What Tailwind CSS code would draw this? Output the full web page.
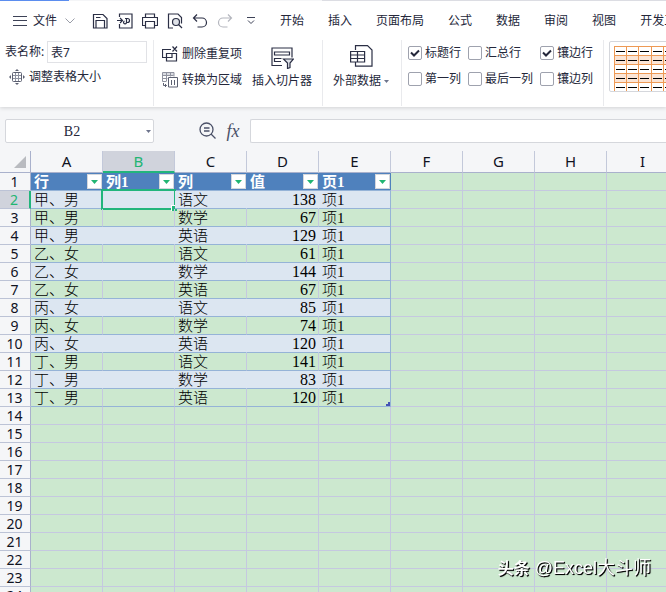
<!DOCTYPE html>
<html lang="zh-CN">
<head>
    <meta charset="UTF-8">
    <meta name="viewport" content="width=device-width, initial-scale=1.0">
    <title>表格工具</title>
    <script src="https://cdn.jsdelivr.net/npm/@tailwindcss/browser@4"></script>
</head>
<body class="h-screen overflow-hidden flex flex-col bg-[#f5f6f8] text-xs leading-4 text-[#24273a] font-['Noto_Sans','Noto_Sans_CJK_SC',sans-serif]">
    <header class="shrink-0 bg-white shadow-[0_1px_4px_rgba(0,0,0,0.15)] overflow-hidden">
        <!-- Window tab edge -->
        <div class="flex h-px">
            <div class="w-[69px] bg-[#5b8def]"></div>
            <div class="w-[253px] bg-[#f4f5f7]"></div>
            <div class="flex-1 bg-[#dcdde3]"></div>
        </div>

        <!-- Menu bar -->
        <nav class="flex items-center h-[39px] pt-px pl-[13px] whitespace-nowrap">
            <button class="flex items-center">
                <svg class="w-[14px] h-[10px] mr-[6px]" viewBox="0 0 14 10" stroke="#3d4257" fill="none"><path d="M0 .5h14M0 4.500h14M0 9.500h14"/></svg>
                文件
                <svg class="w-[10px] h-[6px] ml-2" viewBox="0 0 10 6" stroke="#9a9da8" fill="none"><path d="M.5.5 5 5 9.500.5"/></svg>
            </button>
            <div class="w-px h-6 ml-2 mr-[9px] bg-[#dfe0e4]"></div>
            <div class="flex items-center gap-[9px] text-[#2b2f45]">
                <button aria-label="保存"><svg class="w-4 h-4" viewBox="0 0 16 16" fill="none" stroke="currentColor" stroke-width="1.200"><path d="M1.500 1.500h9.500l4 4v9.500h-13.500zM4 14.500v-7h8.500v7M4 4.500h4.500"/></svg></button>
                <button aria-label="输出为PDF"><svg class="w-4 h-4" viewBox="0 0 16 16" fill="none" stroke="currentColor" stroke-width="1.200"><path d="M2.500 4V1h12.500v14h-12.500v-4M0 7.500h5.500M3 5l2.500 2.500L3 10M8 5.500h2.500a2 2 0 1 1 0 4h-1.500M9.500 5.500v4a1.500 1.500 0 1 1-2-1.500"/></svg></button>
                <button aria-label="打印"><svg class="w-4 h-4" viewBox="0 0 16 16" fill="none" stroke="currentColor" stroke-width="1.200"><path d="M3.500 4.500v-3.500h9v3.500M3.500 12.500h-3v-8h15v8h-3M3.500 8.500h9v6.500h-9z"/></svg></button>
                <button aria-label="打印预览"><svg class="w-4 h-4" viewBox="0 0 16 16" fill="none" stroke="currentColor" stroke-width="1.200"><path d="M6 15h-4.500v-14h9.500l3.500 3.500v6"/><circle cx="9" cy="9" r="3.500" fill="#dfe2e8"/><path d="m11.500 11.500 3.500 3.500"/></svg></button>
                <button aria-label="撤销"><svg class="w-4 h-4" viewBox="0 0 16 16" fill="none" stroke="currentColor" stroke-width="1.200"><path d="M5 1.500 1.500 5 5 8.500M1.500 5h8.500a4.500 4.500 0 0 1 0 9h-4.500"/></svg></button>
                <button aria-label="恢复"><svg class="w-4 h-4 text-[#b4b6be]" viewBox="0 0 16 16" fill="none" stroke="currentColor" stroke-width="1.200"><path d="m11 1.500 3.500 3.500L11 8.500M14.500 5h-8.500a4.500 4.500 0 0 0 0 9h4.500"/></svg></button>
            </div>
            <button class="ml-[14px]" aria-label="自定义快速访问工具栏"><svg class="w-2 h-2" viewBox="0 0 8 8" fill="none" stroke="#3d4257"><path d="M0 .5h8M1 3.500l3 3 3-3"/></svg></button>
            <div class="w-px h-6 ml-[9px] mr-4 bg-[#dfe0e4]"></div>
            <div class="flex gap-6">
                <a href="#">开始</a>
                <a href="#">插入</a>
                <a href="#">页面布局</a>
                <a href="#">公式</a>
                <a href="#">数据</a>
                <a href="#">审阅</a>
                <a href="#">视图</a>
                <a href="#">开发工具</a>
            </div>
        </nav>

        <!-- Ribbon -->
        <div class="flex h-[67px] pb-px whitespace-nowrap">
            <section class="w-[153px] shrink-0 pt-px pl-[5px]">
                <div class="flex items-center justify-between pr-[6px]">
                    <label for="tableName">表名称:</label>
                    <input id="tableName" type="text" value="表7" class="w-[100px] h-[22px] px-[3px] border border-[#e1e2e6]">
                </div>
                <button class="flex items-center gap-1 mt-[6px] ml-1">
                    <svg class="w-4 h-4" viewBox="0 0 16 16" fill="none" stroke="#5d6172"><rect x="3.500" y="3.500" width="9" height="9" rx="1"/><path stroke="#8f93a1" d="M6.500 4v8M9.500 4v8M4 6.500h8M4 9.500h8"/><path fill="#5d6172" stroke="none" d="m8 0 2 2H6zM8 16l2-2H6zM0 8l2-2v4zM16 8l-2-2v4z"/></svg>
                    调整表格大小
                </button>
            </section>
            <section class="flex w-[169px] shrink-0 pl-2 border-l border-[#e9eaed]">
                <div class="flex flex-col gap-[10px] pt-[6px]">
                    <button class="flex items-center gap-1">
                        <svg class="w-4 h-4" viewBox="0 0 16 16" fill="none" stroke="#2b2f45" stroke-width="1.200"><path d="M9 3.500H.5v8h9.500v-4M4.500 7.500h10v7.500h-10zM10.500.5l4.500 5M15 .5l-4.500 5"/></svg>
                        删除重复项
                    </button>
                    <button class="flex items-center gap-1">
                        <svg class="w-4 h-4" viewBox="0 0 16 16" fill="none" stroke="#9093a0"><path fill="#d9dbe1" stroke="none" d="M0 1h12v3H0z"/><path d="M4 9.500H.5v-9h11.500v4M.5 3.500h11M.5 6.500h5M4.500.5v9M8.500.5v4"/><path stroke="#5d6172" d="M6.500 5.500h9v9.500h-9zM9.500 8v5M12.500 8v5M1.500 11v2.500h3M3 12l1.500 1.500L3 15"/></svg>
                        转换为区域
                    </button>
                </div>
                <button class="flex flex-col items-center ml-[10px] pt-[7px]">
                    <svg class="w-[23px] h-[22px] mb-[4px]" viewBox="0 0 23 22" fill="none" stroke="#2b2f45" stroke-width="1.200"><path d="M11 18.500H1V1h20v9.500M3.500 5h15v3h-15zM10.500 11.500h-7v3h6.500"/><path fill="#dfe2e8" d="M12.500 12h10l-3.500 4v4.500l-2.500 1V16z"/></svg>
                    插入切片器
                </button>
            </section>
            <section class="w-[79px] shrink-0 pl-[10px] border-l border-[#e9eaed]">
                <button class="flex flex-col items-center pt-[5px]">
                    <svg class="w-[23px] h-[22px] mb-[6px]" viewBox="0 0 23 22" fill="none" stroke="#2b2f45" stroke-width="1.200"><path d="M5.500 5V.6h12l4.500 4.500v16H5.500V17M.6 6.500h14v10.500H.6zM.6 10h14M.6 13.500h14M7.500 6.500V17"/></svg>
                    <span class="flex items-center gap-[3px]">外部数据<svg class="w-[5px] h-[3px]" viewBox="0 0 5 3" fill="#6d748c"><path d="M0 0h5L2.500 3z"/></svg></span>
                </button>
            </section>
            <section class="w-[202px] shrink-0 grid grid-cols-[60px_72px_53px] content-start gap-y-[10px] pt-[5px] pl-[6px] border-l border-[#e9eaed]">
                <label class="flex items-center gap-[3px]"><input type="checkbox" checked class="peer appearance-none size-[14px] rounded-xs border border-[#9fa2ae] bg-white"><svg class="hidden peer-checked:block w-[10px] h-2 -ml-[15px] mr-[2px]" viewBox="0 0 10 8" fill="none" stroke="#24273a" stroke-width="2"><path d="M1 3.500 4 6.500 9 1.500"/></svg>标题行</label>
                <label class="flex items-center gap-[3px]"><input type="checkbox" class="appearance-none size-[14px] rounded-xs border border-[#9fa2ae] bg-white">汇总行</label>
                <label class="flex items-center gap-[3px]"><input type="checkbox" checked class="peer appearance-none size-[14px] rounded-xs border border-[#9fa2ae] bg-white"><svg class="hidden peer-checked:block w-[10px] h-2 -ml-[15px] mr-[2px]" viewBox="0 0 10 8" fill="none" stroke="#24273a" stroke-width="2"><path d="M1 3.500 4 6.500 9 1.500"/></svg>镶边行</label>
                <label class="flex items-center gap-[3px]"><input type="checkbox" class="appearance-none size-[14px] rounded-xs border border-[#9fa2ae] bg-white">第一列</label>
                <label class="flex items-center gap-[3px]"><input type="checkbox" class="appearance-none size-[14px] rounded-xs border border-[#9fa2ae] bg-white">最后一列</label>
                <label class="flex items-center gap-[3px]"><input type="checkbox" class="appearance-none size-[14px] rounded-xs border border-[#9fa2ae] bg-white">镶边列</label>
            </section>
            <section class="flex-1 min-w-0 pl-[5px] pt-px border-l border-[#e9eaed]">
                <button aria-label="表格样式" class="block w-[200px] h-[51px] pl-1 pt-1 border border-[#d5d7dc] rounded-xs overflow-hidden">
                    <svg class="w-[62px] h-[46px]" viewBox="0 0 62 46" shape-rendering="crispEdges">
                        <path fill="#fbe5d6" d="M0 10h62v8H0zM0 28h62v8H0z"/>
                        <path stroke="#ee9a55" fill="none" d="M0 .5h62M0 9.500h62M0 18.500h62M0 27.500h62M0 36.500h62M.5 0v46M12.500 0v46M24.500 0v46M37.500 0v46M49.500 0v46M61.500 0v46"/>
                        <path stroke="#000" fill="none" d="M2 5.500h9M14 5.500h9M26 5.500h9M39 5.500h9M51 5.500h9M2 14.500h9M14 14.500h9M26 14.500h9M39 14.500h9M51 14.500h9M2 23.500h9M14 23.500h9M26 23.500h9M39 23.500h9M51 23.500h9M2 32.500h9M14 32.500h9M26 32.500h9M39 32.500h9M51 32.500h9M2 41.500h9M14 41.500h9M26 41.500h9M39 41.500h9M51 41.500h9"/>
                    </svg>
                </button>
            </section>
        </div>
    </header>

    <!-- Formula bar -->
    <div class="flex items-center shrink-0 h-11 pt-1 pl-[5px]">
        <div class="flex items-center w-[149px] h-6 pr-[2px] bg-white border border-[#d5d7dc] rounded-xs">
            <input aria-label="名称框" type="text" value="B2" class="flex-1 min-w-0 h-5 pr-2 pt-px text-center text-sm font-['Liberation_Serif',serif]">
            <svg class="w-[5px] h-[3px]" viewBox="0 0 5 3" fill="#6d748c"><path d="M0 0h5L2.500 3z"/></svg>
        </div>
        <button class="ml-[45px]" aria-label="查找"><svg class="w-[18px] h-[18px]" viewBox="0 0 18 18" fill="none" stroke="#4b5168" stroke-width="1.300"><circle cx="7.500" cy="7.500" r="6.500"/><path d="M5 6h5.500M5 9h5.500M12 12l4.500 4.500"/></svg></button>
        <button class="w-5 ml-[6px] mr-[7px] text-[18px] leading-5 italic text-[#4b5168] font-['Liberation_Serif',serif]" aria-label="插入函数">fx</button>
        <input aria-label="编辑栏" type="text" class="flex-1 min-w-0 h-6 px-2 bg-white border border-r-0 border-[#d5d7dc] rounded-l-xs">
    </div>

    <!-- Sheet -->
    <main class="flex-1 min-h-0 overflow-hidden bg-[#cce8cf]">
        <table class="table-fixed border-separate border-spacing-0 w-[679px]">
            <colgroup>
                <col class="w-[31px]">
                <col span="9" class="w-[72px]">
            </colgroup>
            <thead id="sheetHead"></thead>
            <tbody id="sheetBody" class="text-black"></tbody>
        </table>
    </main>

    <div class="fixed right-[15px] bottom-[12px] flex items-center gap-[5px] text-white [text-shadow:1px_1px_1px_#000,1px_1px_0_#333] pointer-events-none">
        <span class="text-base leading-6 font-bold">头条</span>
        <span class="text-[18px] leading-6 font-['Liberation_Sans','Noto_Sans_CJK_SC',sans-serif]">@Excel大斗师</span>
    </div>

    <script>
        const letters = ['A', 'B', 'C', 'D', 'E', 'F', 'G', 'H', 'I'];
        const headers = ['行', '列1', '列', '值', '页1'];
        const rows = [
            ['甲、男', '', '语文', 138, '项1'],
            ['甲、男', '', '数学', 67, '项1'],
            ['甲、男', '', '英语', 129, '项1'],
            ['乙、女', '', '语文', 61, '项1'],
            ['乙、女', '', '数学', 144, '项1'],
            ['乙、女', '', '英语', 67, '项1'],
            ['丙、女', '', '语文', 85, '项1'],
            ['丙、女', '', '数学', 74, '项1'],
            ['丙、女', '', '英语', 120, '项1'],
            ['丁、男', '', '语文', 141, '项1'],
            ['丁、男', '', '数学', 83, '项1'],
            ['丁、男', '', '英语', 120, '项1']
        ];

        // Column letters
        let head = '<tr><th class="h-[22px] p-0 bg-[#f5f6f8] border-r border-b border-[#a9b1cc]"><svg class="w-3 h-3 ml-auto mr-1" viewBox="0 0 12 12" fill="#b9bbc0"><path d="M12 0v12H0z"/></svg></th>';
        letters.forEach((l) => {
            const cls = l === 'B'
                ? 'bg-[#d0d3dc] text-[#22b573] border-b-2 border-b-[#22b57c]'
                : 'bg-[#f5f6f8] text-[#10121f] border-b border-b-[#a9b1cc]';
            head += `<th scope="col" class="h-[22px] p-0 text-[15px] leading-5 align-top font-normal border-r border-r-[#c3c9da] ${cls}">${l}</th>`;
        });
        document.getElementById('sheetHead').innerHTML = head + '</tr>';

        // Sheet rows
        let body = '';
        for (let n = 1; n <= 24; n++) {
            const num = n === 2
                ? 'bg-[#d0d3dc] text-[#22b573] border-r-2 border-r-[#22b57c]'
                : 'bg-[#f5f6f8] text-[#10121f] border-r border-r-[#a9b1cc]';
            body += `<tr><th scope="row" class="h-[18px] p-0 pr-px text-sm leading-[17px] font-normal border-b border-b-[#bcc3d6] ${num}">${n}</th>`;
            letters.forEach((l, i) => {
                if (n === 1 && i < 5) {
                    body += `<td class="h-[18px] p-0 bg-[#4f81bd] border-b border-[#95b3d7]"><div class="flex items-center justify-between h-[17px] pl-[3px] pr-px text-white font-bold text-[15px] leading-[17px] font-['Liberation_Serif','Noto_Sans_CJK_SC',serif]"><span class="pt-px">${headers[i]}</span><button aria-label="筛选" class="flex items-center justify-center size-[15px] bg-white border border-[#d5d7dc]"><svg class="w-[7px] h-[4px]" viewBox="0 0 7 4" fill="#22b573"><path d="M0 0h7L3.500 4z"/></svg></button></div></td>`;
                } else if (n > 1 && n < 14 && i < 5) {
                    const band = n % 2 === 0
                        ? (i === 4 ? 'bg-[#dce6f1] border-r border-r-[#95b3d7]' : 'bg-[#dce6f1] border-r border-r-[#dce6f1]')
                        : (i === 4 ? 'border-r border-r-[#95b3d7]' : 'border-r border-r-[#c5c8e0]');
                    const align = i === 3 ? 'text-right pr-[2px] text-base' : 'pl-[3px] text-[15px]';
                    let extra = '';
                    if (n === 2 && i === 1) {
                        extra = '<span class="absolute -top-[2px] -left-[2px] -right-[2px] -bottom-[2px] border-2 border-[#22b57c]"></span><span class="absolute -right-[3px] -bottom-[3px] size-[6px] bg-[#22b57c] border-l border-t border-white"></span>';
                    }
                    if (n === 13 && i === 4) {
                        extra = '<svg class="absolute right-0 bottom-0 w-1 h-1" viewBox="0 0 4 4" fill="#4453b5"><path d="M2 0h2v4H0V2h2z"/></svg>';
                    }
                    body += `<td class="relative h-[18px] p-0 pt-px font-light font-['Liberation_Serif','Noto_Sans_CJK_SC',serif] border-b border-b-[#95b3d7] ${band} ${align}"><div class="h-4 leading-4">${rows[n - 2][i]}</div>${extra}</td>`;
                } else {
                    body += '<td class="h-[18px] p-0 border-r border-b border-[#c5c8e0]"></td>';
                }
            });
            body += '</tr>';
        }
        document.getElementById('sheetBody').innerHTML = body;
    </script>
</body>
</html>
